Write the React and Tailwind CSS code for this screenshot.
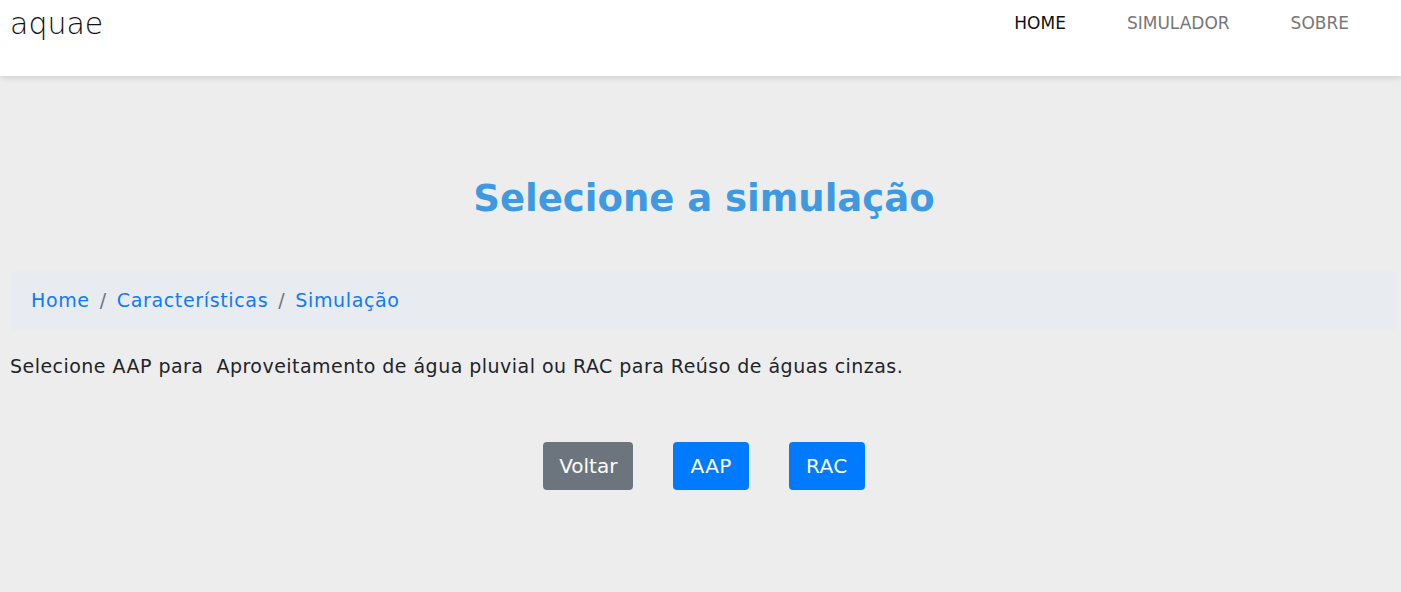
export default function App() {
  return (
    <div className="min-h-[592px] bg-[#ededed] font-['DejaVu_Sans',sans-serif]">
      {/* Header */}
      <header className="h-[76px] bg-white shadow-[0_2px_6px_rgba(0,0,0,0.12)] flex items-start justify-between">
        <div className="pl-[10px] pt-[5px] text-[30px] leading-[38px] text-[#111] font-light">aquae</div>
        <nav className="flex pt-[12px] pr-[52px] text-[17px] leading-[22px] font-medium">
          <a className="text-[#111]">HOME</a>
          <a className="ml-[61px] text-[#777]">SIMULADOR</a>
          <a className="ml-[61px] text-[#777]">SOBRE</a>
        </nav>
      </header>

      {/* Content */}
      <main className="pl-[10px] pr-[3px]">
        <h1 className="pt-[99px] text-center text-[37px] leading-[48px] font-bold text-[#3d9ae2]">
          Selecione a simulação
        </h1>
        <ol className="mt-[48px] flex items-center h-[59px] px-[21px] rounded bg-[#e8ebef] text-[19px] tracking-[0.65px] text-[#0d7bff]">
          <li>Home</li>
          <li className="px-[10px] text-[#6c757d]">/</li>
          <li>Características</li>
          <li className="px-[10px] text-[#6c757d]">/</li>
          <li>Simulação</li>
        </ol>
        <p className="mt-[22px] text-[19px] leading-[28px] tracking-[0.47px] text-[#212529]">
          Selecione AAP para&nbsp; Aproveitamento de água pluvial ou RAC para Reúso de águas cinzas.
        </p>
        <div className="mt-[62px] flex justify-center gap-[40px]">
          <button className="h-[48px] px-[16px] rounded text-[20px] text-white bg-[#6c757d]">Voltar</button>
          <button className="h-[48px] px-[17px] rounded text-[20px] tracking-[0.5px] text-white bg-[#007bff]">AAP</button>
          <button className="h-[48px] px-[17px] rounded text-[20px] tracking-[0.5px] text-white bg-[#007bff]">RAC</button>
        </div>
      </main>
    </div>
  )
}
